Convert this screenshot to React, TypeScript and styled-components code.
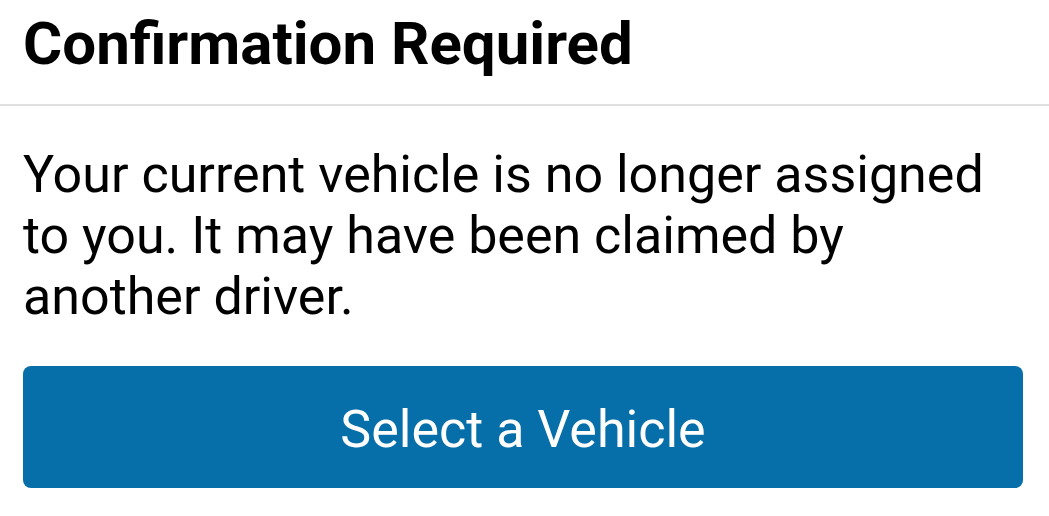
import React from "react";
import styled, { createGlobalStyle } from "styled-components";

const GlobalStyle = createGlobalStyle`
  html, body {
    margin: 0;
    padding: 0;
    background: #ffffff;
  }
  body {
    font-family: Roboto, "Liberation Sans", sans-serif;
    -webkit-font-smoothing: antialiased;
  }
`;

const Dialog = styled.div`
  width: 1049px;
  height: 516px;
  background: #ffffff;
  display: flex;
  flex-direction: column;
`;

const Header = styled.div`
  height: 104px;
  border-bottom: 2px solid #e0e0e0;
  padding: 0 23px;
  display: flex;
  align-items: flex-start;
`;

const Title = styled.h1`
  margin: 0;
  padding-top: 8px;
  font-size: 60px;
  line-height: 72px;
  font-weight: 700;
  color: #000000;
`;

const Body = styled.div`
  padding: 0 25px 0 23px;
  display: flex;
  flex-direction: column;
`;

const Message = styled.p`
  margin: 0;
  padding: 38px 0 0;
  font-size: 52px;
  line-height: 61px;
  color: #000000;
  max-width: 1000px;
`;

const PrimaryButton = styled.button`
  margin-top: 39px;
  width: 1000px;
  height: 122px;
  padding: 4px 0 0;
  border: none;
  border-radius: 8px;
  background: #066ea8;
  color: #ffffff;
  font-family: Roboto, "Liberation Sans", sans-serif;
  font-size: 52px;
  cursor: pointer;
`;

export default function App() {
  return (
    <>
      <GlobalStyle />
      <Dialog>
        <Header>
          <Title>Confirmation Required</Title>
        </Header>
        <Body>
          <Message>
            Your current vehicle is no longer assigned to you. It may have been
            claimed by another driver.
          </Message>
          <PrimaryButton>Select a Vehicle</PrimaryButton>
        </Body>
      </Dialog>
    </>
  );
}
